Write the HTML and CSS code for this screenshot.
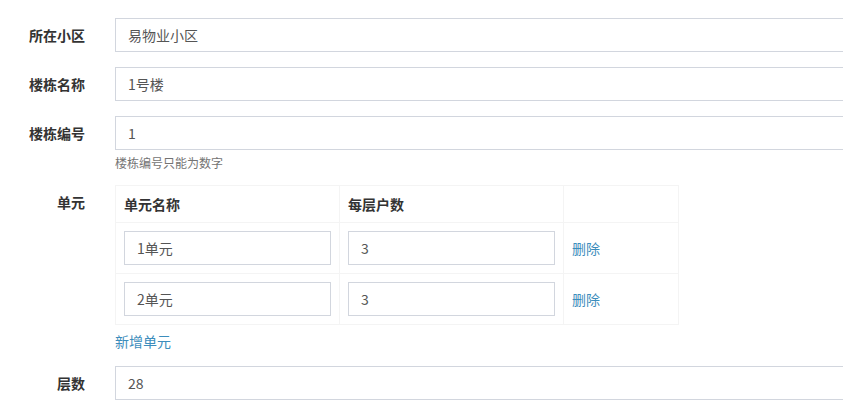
FILE: index.html
```html
<!DOCTYPE html>
<html>
<head>
  <meta charset="UTF-8">
  <title>楼栋信息</title>
  <link rel="stylesheet" href="styles.css">
</head>
<body>
  <form class="form-horizontal">
    <div class="form-group">
      <label class="control-label">所在小区</label>
      <div class="control">
        <input type="text" class="form-control" value="易物业小区">
      </div>
    </div>
    <div class="form-group">
      <label class="control-label">楼栋名称</label>
      <div class="control">
        <input type="text" class="form-control" value="1号楼">
      </div>
    </div>
    <div class="form-group">
      <label class="control-label">楼栋编号</label>
      <div class="control">
        <input type="text" class="form-control" value="1">
        <span class="help-block">楼栋编号只能为数字</span>
      </div>
    </div>
    <div class="form-group">
      <label class="control-label">单元</label>
      <div class="control">
        <table class="unit-table">
          <colgroup>
            <col class="col-name">
            <col class="col-count">
            <col class="col-action">
          </colgroup>
          <thead>
            <tr>
              <th>单元名称</th>
              <th>每层户数</th>
              <th></th>
            </tr>
          </thead>
          <tbody>
            <tr>
              <td><input type="text" class="form-control" value="1单元"></td>
              <td><input type="text" class="form-control" value="3"></td>
              <td><a href="#" class="link">删除</a></td>
            </tr>
            <tr>
              <td><input type="text" class="form-control" value="2单元"></td>
              <td><input type="text" class="form-control" value="3"></td>
              <td><a href="#" class="link">删除</a></td>
            </tr>
          </tbody>
        </table>
        <a href="#" class="link add-unit">新增单元</a>
      </div>
    </div>
    <div class="form-group">
      <label class="control-label">层数</label>
      <div class="control">
        <input type="text" class="form-control" value="28">
      </div>
    </div>
  </form>
</body>
</html>
```

FILE: styles.css
```css
html {
  overflow: hidden;
}

body {
  margin: 0;
  background: #fff;
  color: #333;
  font-family: "Noto Sans CJK SC", "Liberation Sans", sans-serif;
  font-size: 14px;
}

.form-horizontal {
  padding-top: 18px;
  width: 960px;
}

.form-group {
  display: flex;
  margin-bottom: 15px;
}

.control-label {
  width: 85px;
  padding: 7px 15px 0 0;
  line-height: 20px;
  text-align: right;
  font-weight: bold;
  color: #333;
  flex-shrink: 0;
}

.control {
  flex: 1;
  padding-left: 15px;
}

.form-control {
  display: block;
  box-sizing: border-box;
  width: 100%;
  height: 34px;
  padding: 6px 12px;
  border: 1px solid #d2d6de;
  border-radius: 0;
  background: #fff;
  color: #555;
  font-family: inherit;
  font-size: 14px;
  line-height: 20px;
  outline: none;
}

.help-block {
  display: block;
  margin-top: 5px;
  line-height: 15px;
  font-size: 12px;
  color: #737373;
}

.unit-table {
  border-collapse: collapse;
  table-layout: fixed;
  width: 564px;
}

.col-name,
.col-count {
  width: 224px;
}

.unit-table th,
.unit-table td {
  border: 1px solid #f4f4f4;
  padding: 8px;
  line-height: 20px;
  text-align: left;
  vertical-align: middle;
}

.unit-table th {
  font-weight: bold;
  color: #333;
}

.link {
  color: #3c8dbc;
  text-decoration: none;
}

.add-unit {
  display: block;
  margin-top: 6px;
  line-height: 20px;
}
```
